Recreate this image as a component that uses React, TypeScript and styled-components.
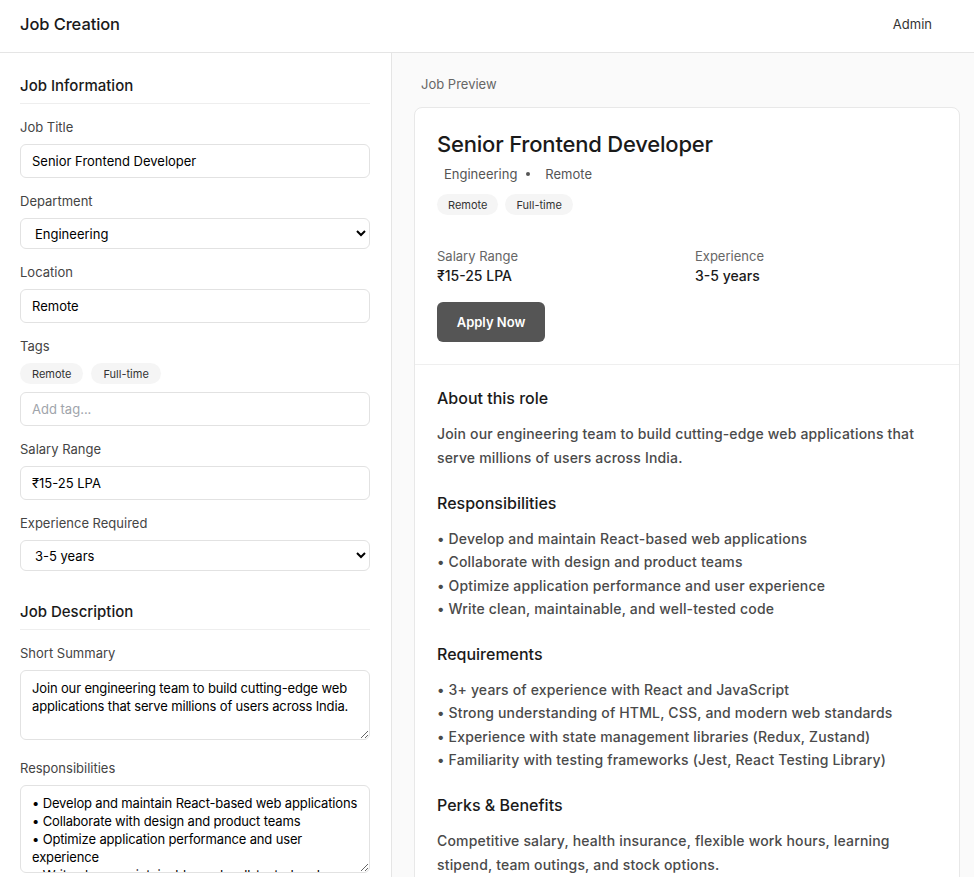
import React from "react";
import styled, { createGlobalStyle } from "styled-components";

const GlobalStyle = createGlobalStyle`
  * { box-sizing: border-box; }
  html, body { margin: 0; padding: 0; }
  body {
    font-family: Inter, "Noto Sans", "Liberation Sans", sans-serif;
    color: #1a1a1a;
    background: #ffffff;
    overflow: hidden;
  }
`;

const Page = styled.div`
  display: flex;
  flex-direction: column;
  height: 100vh;
`;

const Header = styled.header`
  height: 53px;
  flex: 0 0 53px;
  display: flex;
  align-items: center;
  justify-content: space-between;
  padding: 0 42px 5px 20px;
  border-bottom: 1px solid #e5e5e5;
  background: #fff;
`;

const AppTitle = styled.h1`
  margin: 0;
  font-size: 16.5px;
  font-weight: 500;
  color: #1a1a1a;
  letter-spacing: -0.1px;
`;

const UserName = styled.span`
  font-size: 13px;
  color: #333;
`;

const Main = styled.div`
  flex: 1;
  display: flex;
  min-height: 0;
`;

const FormPanel = styled.aside`
  width: 392px;
  flex: 0 0 392px;
  border-right: 1px solid #e5e5e5;
  padding: 22px 21px 0 20px;
  overflow: hidden;
  background: #fff;
`;

const Section = styled.section`
  margin-bottom: 30px;
`;

const SectionTitle = styled.h2`
  margin: 0 0 14px;
  font-size: 15px;
  line-height: 22px;
  font-weight: 500;
  color: #1a1a1a;
  padding-bottom: 6px;
  border-bottom: 1px solid #eeeeee;
`;

const Field = styled.div<{ $gap?: number }>`
  margin-bottom: ${(p) => p.$gap ?? 14}px;
`;

const Label = styled.label`
  display: block;
  font-size: 13px;
  line-height: 18px;
  color: #444;
  margin-bottom: 8px;
`;

const TextInput = styled.input`
  display: block;
  width: 100%;
  height: 34px;
  padding: 0 11px;
  border: 1px solid #e2e2e2;
  border-radius: 6px;
  font-family: inherit;
  font-size: 13px;
  font-weight: 400;
  color: #000;
  background: #fff;
  outline: none;
  &::placeholder {
    color: #a0a4ab;
  }
`;

const Select = styled.select`
  display: block;
  width: 100%;
  height: 31px;
  padding: 0 6px 0 10px;
  border: 1px solid #e2e2e2;
  border-radius: 6px;
  font-family: inherit;
  font-size: 13px;
  font-weight: 400;
  color: #000;
  background: #fff;
  outline: none;
`;

const TextArea = styled.textarea<{ $h: number }>`
  display: block;
  width: 100%;
  height: ${(p) => p.$h}px;
  padding: 8px 9px 8px 11px;
  border: 1px solid #e2e2e2;
  border-radius: 6px;
  font-family: inherit;
  font-size: 13px;
  font-weight: 400;
  line-height: 18px;
  letter-spacing: -0.15px;
  color: #000;
  background: #fff;
  outline: none;
  resize: vertical;
  overflow: hidden;
`;

const ChipRow = styled.div<{ $gap: number }>`
  display: flex;
  gap: ${(p) => p.$gap}px;
  margin-bottom: 8px;
`;

const Chip = styled.span<{ $pad: number }>`
  display: inline-flex;
  align-items: center;
  height: 21px;
  padding: 0 ${(p) => p.$pad}px;
  border-radius: 11px;
  background: #f5f5f5;
  font-size: 11px;
  color: #333;
`;

const PreviewPanel = styled.main`
  flex: 1;
  background: #fafafa;
  padding: 22px 14px 0 22px;
  overflow: hidden;
`;

const PreviewLabel = styled.div`
  font-size: 13px;
  line-height: 18px;
  color: #666;
  padding-left: 7px;
  margin-bottom: 14px;
`;

const Card = styled.article`
  background: #fff;
  border: 1px solid #e8e8e8;
  border-radius: 8px;
`;

const CardTop = styled.div`
  padding: 21px 22px 22px;
  border-bottom: 1px solid #efefef;
`;

const JobTitle = styled.h2`
  margin: 0 0 5px;
  font-size: 22px;
  line-height: 30px;
  font-weight: 500;
  color: #1a1a1a;
  letter-spacing: -0.2px;
`;

const Meta = styled.div`
  display: flex;
  align-items: center;
  font-size: 13px;
  line-height: 20px;
  color: #555;
  padding-left: 7px;
  margin-bottom: 10px;
`;

const MetaDot = styled.span`
  display: inline-block;
  width: 4px;
  height: 4px;
  border-radius: 50%;
  background: #555;
  margin: 0 15px 0 9px;
`;

const InfoGrid = styled.div`
  display: grid;
  grid-template-columns: 1fr 1fr;
  column-gap: 16px;
  margin-top: 32px;
  margin-bottom: 16px;
`;

const InfoLabel = styled.div`
  font-size: 13px;
  line-height: 18px;
  color: #666;
  margin-bottom: 1px;
`;

const InfoValue = styled.div`
  font-size: 14px;
  line-height: 20px;
  font-weight: 500;
  color: #1a1a1a;
`;

const ApplyButton = styled.button`
  height: 40px;
  width: 108px;
  border: none;
  border-radius: 6px;
  background: #555555;
  color: #fff;
  font-family: inherit;
  font-size: 13px;
  font-weight: 600;
  cursor: pointer;
`;

const CardBody = styled.div`
  padding: 22px 22px 24px;
`;

const BodyBlock = styled.div`
  margin-bottom: 23px;
`;

const BodyHeading = styled.h3`
  margin: 0 0 13px;
  font-size: 16px;
  line-height: 22px;
  font-weight: 500;
  color: #1a1a1a;
`;

const BodyText = styled.p`
  margin: 0;
  font-size: 14px;
  line-height: 23.5px;
  font-weight: 500;
  letter-spacing: 0.17px;
  color: #4a4a4a;
`;

const BulletList = styled.ul`
  margin: 0;
  padding: 0;
  list-style: none;
`;

const BulletItem = styled.li`
  font-size: 14px;
  line-height: 23.3px;
  font-weight: 500;
  letter-spacing: 0.17px;
  color: #4a4a4a;
`;

const responsibilities = [
  "Develop and maintain React-based web applications",
  "Collaborate with design and product teams",
  "Optimize application performance and user experience",
  "Write clean, maintainable, and well-tested code",
];

const requirements = [
  "3+ years of experience with React and JavaScript",
  "Strong understanding of HTML, CSS, and modern web standards",
  "Experience with state management libraries (Redux, Zustand)",
  "Familiarity with testing frameworks (Jest, React Testing Library)",
];

const summary =
  "Join our engineering team to build cutting-edge web applications that serve millions of users across India.";

const perks =
  "Competitive salary, health insurance, flexible work hours, learning stipend, team outings, and stock options.";

export default function App() {
  return (
    <>
      <GlobalStyle />
      <Page>
        <Header>
          <AppTitle>Job Creation</AppTitle>
          <UserName>Admin</UserName>
        </Header>
        <Main>
          <FormPanel>
            <Section>
              <SectionTitle>Job Information</SectionTitle>
              <Field>
                <Label>Job Title</Label>
                <TextInput defaultValue="Senior Frontend Developer" />
              </Field>
              <Field>
                <Label>Department</Label>
                <Select defaultValue="Engineering">
                  <option>Engineering</option>
                  <option>Design</option>
                  <option>Product</option>
                  <option>Marketing</option>
                </Select>
              </Field>
              <Field>
                <Label>Location</Label>
                <TextInput defaultValue="Remote" />
              </Field>
              <Field>
                <Label>Tags</Label>
                <ChipRow $gap={8}>
                  <Chip $pad={12}>Remote</Chip>
                  <Chip $pad={12}>Full-time</Chip>
                </ChipRow>
                <TextInput placeholder="Add tag..." />
              </Field>
              <Field>
                <Label>Salary Range</Label>
                <TextInput defaultValue="₹15-25 LPA" />
              </Field>
              <Field>
                <Label>Experience Required</Label>
                <Select defaultValue="3-5 years">
                  <option>0-1 years</option>
                  <option>1-3 years</option>
                  <option>3-5 years</option>
                  <option>5+ years</option>
                </Select>
              </Field>
            </Section>
            <Section>
              <SectionTitle>Job Description</SectionTitle>
              <Field $gap={19}>
                <Label>Short Summary</Label>
                <TextArea $h={70} defaultValue={summary} />
              </Field>
              <Field $gap={19}>
                <Label>Responsibilities</Label>
                <TextArea
                  $h={88}
                  defaultValue={responsibilities.map((r) => "• " + r).join("\n")}
                />
              </Field>
              <Field $gap={19}>
                <Label>Requirements</Label>
                <TextArea
                  $h={88}
                  defaultValue={requirements.map((r) => "• " + r).join("\n")}
                />
              </Field>
            </Section>
          </FormPanel>
          <PreviewPanel>
            <PreviewLabel>Job Preview</PreviewLabel>
            <Card>
              <CardTop>
                <JobTitle>Senior Frontend Developer</JobTitle>
                <Meta>
                  <span>Engineering</span>
                  <MetaDot />
                  <span>Remote</span>
                </Meta>
                <ChipRow $gap={7}>
                  <Chip $pad={11}>Remote</Chip>
                  <Chip $pad={11}>Full-time</Chip>
                </ChipRow>
                <InfoGrid>
                  <div>
                    <InfoLabel>Salary Range</InfoLabel>
                    <InfoValue>₹15-25 LPA</InfoValue>
                  </div>
                  <div>
                    <InfoLabel>Experience</InfoLabel>
                    <InfoValue>3-5 years</InfoValue>
                  </div>
                </InfoGrid>
                <ApplyButton>Apply Now</ApplyButton>
              </CardTop>
              <CardBody>
                <BodyBlock>
                  <BodyHeading>About this role</BodyHeading>
                  <BodyText>{summary}</BodyText>
                </BodyBlock>
                <BodyBlock>
                  <BodyHeading>Responsibilities</BodyHeading>
                  <BulletList>
                    {responsibilities.map((r) => (
                      <BulletItem key={r}>• {r}</BulletItem>
                    ))}
                  </BulletList>
                </BodyBlock>
                <BodyBlock>
                  <BodyHeading>Requirements</BodyHeading>
                  <BulletList>
                    {requirements.map((r) => (
                      <BulletItem key={r}>• {r}</BulletItem>
                    ))}
                  </BulletList>
                </BodyBlock>
                <BodyBlock>
                  <BodyHeading>Perks &amp; Benefits</BodyHeading>
                  <BodyText>{perks}</BodyText>
                </BodyBlock>
              </CardBody>
            </Card>
          </PreviewPanel>
        </Main>
      </Page>
    </>
  );
}
